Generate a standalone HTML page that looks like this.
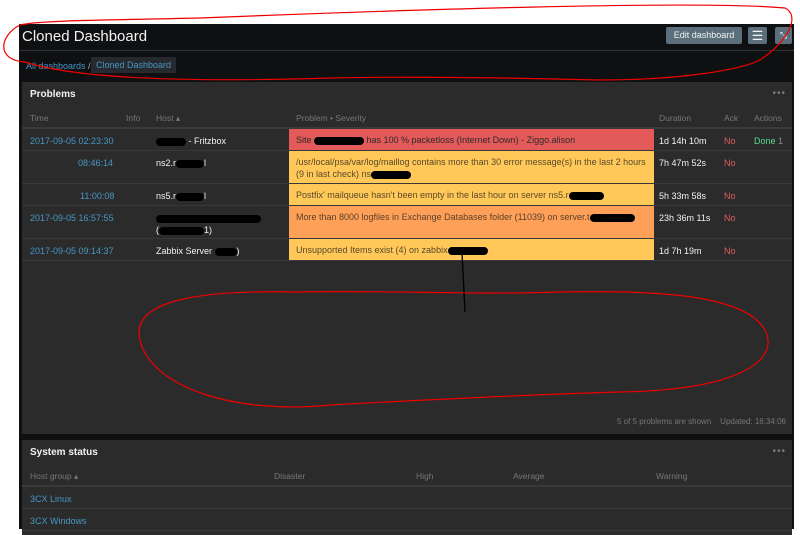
<!DOCTYPE html>
<html><head><meta charset="utf-8"><style>
*{margin:0;padding:0;box-sizing:border-box}
body{width:800px;height:529px;background:#fff;font-family:"Liberation Sans",Arial,sans-serif;position:relative;overflow:hidden;font-size:9px}
#app{position:absolute;left:19px;top:24px;width:775px;height:505px;background:#0e1012}
.title{position:absolute;left:3px;top:4px;font-size:15px;color:#f2f2f2}
.hl{position:absolute;left:0;right:0;top:26px;height:1px;background:#303336}
.btn{position:absolute;top:3px;height:17px;background:#5b6e7c;color:#f2f2f2;border-radius:2px;font-size:9px;line-height:17px;text-align:center}
.bc{position:absolute;top:34px;font-size:9px;color:#4796c4}
.panel{position:absolute;left:3px;width:770px;background:#2b2b2b}
.ph{position:absolute;left:8px;top:7px;font-weight:bold;color:#f2f2f2;font-size:10px}
.dots{position:absolute;right:6px;top:6px;color:#7a7a7a;font-size:10px;letter-spacing:1px}
.th{position:absolute;top:31px;color:#777;font-size:8.5px}
.row{position:absolute;left:0;right:0;border-bottom:1px solid #383838}
.c{position:absolute;top:6px;color:#f2f2f2;font-size:9px;line-height:12px}
.t{color:#4796c4}
.p{position:absolute;left:267px;width:365px;top:0;bottom:0;padding:5px 7px;line-height:12px;font-size:9px;white-space:nowrap;overflow:hidden}
.no{color:#e45959}
.red{background:#e45959;color:#2b2b2b}
.yel{background:#ffc859;color:#59492a}
.ora{background:#ffa059;color:#59402a}
.blk{display:inline-block;background:#000;height:8px;border-radius:4px;vertical-align:middle}
</style></head><body>
<div id="app">
<div class="title">Cloned Dashboard</div>
<div class="btn" style="left:647px;width:76px">Edit dashboard</div>
<div class="btn" style="left:729px;width:19px;font-size:13px">☰</div>
<div class="btn" style="left:756px;width:17px">⤡</div>
<div class="hl"></div>
<div class="bc" style="left:7px;top:37px">All dashboards <span style="color:#aaa">/</span></div>
<div class="bc" style="left:72px;top:33px;background:#262a2e;padding:3px 5px">Cloned Dashboard</div>
<div class="panel" style="top:58px;height:352px">
<div class="ph">Problems</div><div class="dots">•••</div>
<div class="th" style="left:8px">Time</div><div class="th" style="left:104px">Info</div><div class="th" style="left:134px">Host ▴</div><div class="th" style="left:274px">Problem • Severity</div><div class="th" style="left:637px">Duration</div><div class="th" style="left:702px">Ack</div><div class="th" style="left:732px">Actions</div>
<div style="position:absolute;left:0;right:0;top:45px;height:2px;background:#3a3a3a"></div>
<div class="row" style="top:47px;height:22px"><div class="c t" style="left:8px">2017-09-05 02:23:30</div><div class="c" style="left:134px"><span class="blk" style="width:30px"></span> - Fritzbox</div><div class="p red">Site <span class="blk" style="width:50px"></span> has 100 % packetloss (Internet Down) - Ziggo.alison</div><div class="c" style="left:637px">1d 14h 10m</div><div class="c no" style="left:702px">No</div><div class="c" style="left:732px;color:#59db8f">Done <span style="color:#888">1</span></div></div>
<div class="row" style="top:69px;height:33px"><div class="c t" style="left:56px">08:46:14</div><div class="c" style="left:134px">ns2.r<span class="blk" style="width:28px"></span>l</div><div class="p yel">/usr/local/psa/var/log/maillog contains more than 30 error message(s) in the last 2 hours<br>(9 in last check) ns<span class="blk" style="width:40px"></span></div><div class="c" style="left:637px">7h 47m 52s</div><div class="c no" style="left:702px">No</div></div>
<div class="row" style="top:102px;height:22px"><div class="c t" style="left:58px">11:00:08</div><div class="c" style="left:134px">ns5.r<span class="blk" style="width:28px"></span>l</div><div class="p yel">Postfix' mailqueue hasn't been empty in the last hour on server ns5.r<span class="blk" style="width:35px"></span></div><div class="c" style="left:637px">5h 33m 58s</div><div class="c no" style="left:702px">No</div></div>
<div class="row" style="top:124px;height:33px"><div class="c t" style="left:8px">2017-09-05 16:57:55</div><div class="c" style="left:134px"><span class="blk" style="width:105px"></span><br>(<span class="blk" style="width:45px"></span>1)</div><div class="p ora">More than 8000 logfiles in Exchange Databases folder (11039) on server.t<span class="blk" style="width:45px"></span></div><div class="c" style="left:637px">23h 36m 11s</div><div class="c no" style="left:702px">No</div></div>
<div class="row" style="top:157px;height:22px"><div class="c t" style="left:8px">2017-09-05 09:14:37</div><div class="c" style="left:134px">Zabbix Server <span class="blk" style="width:22px"></span>)</div><div class="p yel">Unsupported Items exist (4) on zabbix<span class="blk" style="width:40px"></span></div><div class="c" style="left:637px">1d 7h 19m</div><div class="c no" style="left:702px">No</div></div>
<div style="position:absolute;right:6px;top:335px;color:#777;font-size:8px">5 of 5 problems are shown &nbsp;&nbsp; Updated: 16:34:06</div>
</div>
<div class="panel" style="top:416px;height:95px">
<div class="ph" style="top:7px">System status</div><div class="dots">•••</div>
<div class="th" style="left:8px;top:31px">Host group ▴</div><div class="th" style="left:252px;top:31px">Disaster</div><div class="th" style="left:394px;top:31px">High</div><div class="th" style="left:491px;top:31px">Average</div><div class="th" style="left:634px;top:31px">Warning</div>
<div style="position:absolute;left:0;right:0;top:45px;height:2px;background:#3a3a3a"></div>
<div class="row" style="top:47px;height:22px"><div class="c t" style="left:8px">3CX Linux</div></div>
<div class="row" style="top:69px;height:22px"><div class="c t" style="left:8px">3CX Windows</div></div>
</div>
</div>
<svg style="position:absolute;left:0;top:0" width="800" height="529"><g fill="none" stroke="#e00" stroke-width="1.2">
<path d="M20 25 C0 35 -5 60 25 62 C80 80 200 82 330 78 C420 76 520 78 600 80 C680 80 740 70 760 60 C790 40 800 15 785 8 C700 0 400 10 200 18 C120 20 40 20 20 25Z"/>
<path d="M295 292 C200 290 130 300 140 340 C150 385 230 415 330 405 C420 400 520 395 620 392 C740 390 780 360 765 330 C745 295 660 290 560 292 C470 295 380 290 295 292Z"/></g>
<path d="M462 253 L465 312" stroke="#000" stroke-width="1.3"/></svg>
</body></html>
